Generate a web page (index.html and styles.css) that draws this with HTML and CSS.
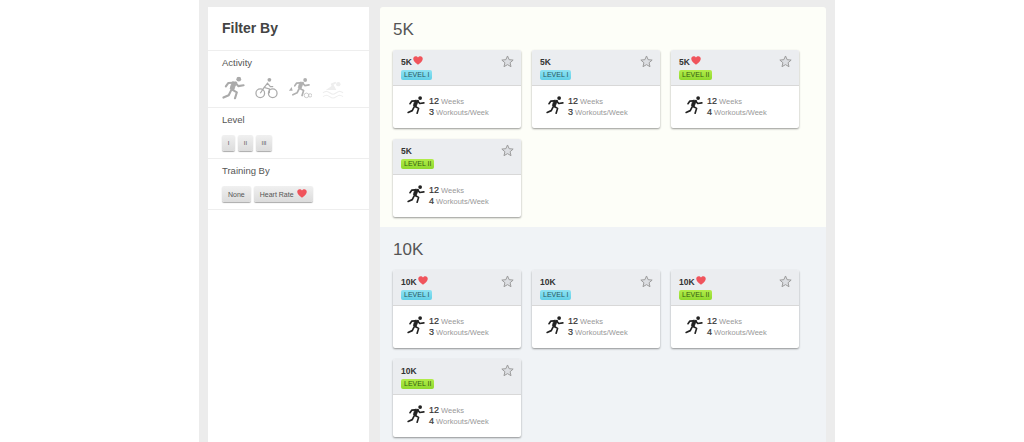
FILE: index.html
```html
<!DOCTYPE html>
<html lang="en">
<head>
<meta charset="utf-8">
<title>Training Plans</title>
<link rel="stylesheet" href="styles.css">
</head>
<body>
<svg class="defs" width="0" height="0" aria-hidden="true">
  <symbol id="run" viewBox="0 0 24 24">
    <circle cx="17.500" cy="2.800" r="2.500" fill="currentColor"/>
    <path d="M15.500 6l-2 4.500-1.500 4-3.500-1.500 1-4 1.500-3.500z" fill="currentColor" stroke="currentColor" stroke-width="1" stroke-linejoin="round"/>
    <path d="M14 6.500l3 3.500 5.500-.8M11 6.500l-4.500.3-2.500 3.500M11 14l4.500 2.500-2 6.500M9.500 14.500l-2.500 5-5.500 2.500" fill="none" stroke="currentColor" stroke-width="2.200" stroke-linejoin="round" stroke-linecap="round"/>
  </symbol>
  <symbol id="heart" viewBox="0 0 20 18">
    <path d="M10 17.500C3 12 .5 9 .5 5.400.5 2.600 2.700.5 5.300.5 7.200.5 9 1.600 10 3.200 11 1.600 12.800.5 14.700.5c2.600 0 4.800 2.100 4.800 4.900C19.500 9 17 12 10 17.500z"/>
  </symbol>
  <symbol id="star" viewBox="0 0 20 20">
    <path d="M10 1.500l2.500 5.700 6.200.6-4.700 4.100 1.400 6.100-5.400-3.200-5.400 3.200 1.400-6.100-4.700-4.100 6.200-.6z"/>
  </symbol>
</svg>
<div class="shell">
  <aside class="sidebar">
    <h2 class="filter-title">Filter By</h2>
    <section class="filter filter-activity">
      <h3 class="filter-label">Activity</h3>
      <div class="activity-icons">
        <svg class="act act-run" viewBox="0 0 24 24"><use href="#run"/></svg>
        <svg class="act act-bike" viewBox="0 0 24 24">
          <circle cx="5.500" cy="17.500" r="4.500"/><circle cx="18.500" cy="17.500" r="4.500"/>
          <path d="M5.500 17.500l4-6 5.500 1.500v4.500M9.500 11.500l3.500-4.500 3 3.500h3"/>
          <circle class="fill" cx="15" cy="3.500" r="2"/>
        </svg>
        <svg class="act act-tri" viewBox="0 0 26 24">
          <use href="#run" x="4" width="20" height="22"/>
          <path class="fill" d="M1 15l3-4 1 4z"/>
          <circle class="thin" cx="20" cy="20" r="2.500"/><circle class="thin" cx="24" cy="20" r="1.800"/>
        </svg>
        <svg class="act act-swim" viewBox="0 0 24 24">
          <circle class="fill" cx="17" cy="8" r="2.300"/>
          <path class="fill" d="M4 14l6-4-1-2.500 5-2 1 1.500-3 1.500 3 5.500z"/>
          <path d="M1 17c3-2 4-2 7 0s4 2 7 0 4-2 7 0M1 21c3-2 4-2 7 0s4 2 7 0 4-2 7 0"/>
        </svg>
      </div>
    </section>
    <section class="filter filter-level">
      <h3 class="filter-label">Level</h3>
      <div class="buttons">
        <button class="btn btn-sm">I</button>
        <button class="btn btn-sm">II</button>
        <button class="btn btn-sm">III</button>
      </div>
    </section>
    <section class="filter filter-training">
      <h3 class="filter-label">Training By</h3>
      <div class="buttons">
        <button class="btn">None</button>
        <button class="btn">Heart Rate <svg class="heart heart-btn"><use href="#heart"/></svg></button>
      </div>
    </section>
  </aside>
  <main class="content">
    <section class="group group-5k">
      <h1 class="group-title">5K</h1>
      <div class="cards">
        <article class="card">
          <header class="card-head">
            <div class="card-name">5K<svg class="heart"><use href="#heart"/></svg></div>
            <span class="badge badge-one">LEVEL I</span>
            <svg class="star"><use href="#star"/></svg>
          </header>
          <div class="card-body">
            <svg class="runner"><use href="#run"/></svg>
            <p class="stats"><b>12</b> Weeks<br><b>3</b> Workouts/Week</p>
          </div>
        </article>
        <article class="card">
          <header class="card-head">
            <div class="card-name">5K</div>
            <span class="badge badge-one">LEVEL I</span>
            <svg class="star"><use href="#star"/></svg>
          </header>
          <div class="card-body">
            <svg class="runner"><use href="#run"/></svg>
            <p class="stats"><b>12</b> Weeks<br><b>3</b> Workouts/Week</p>
          </div>
        </article>
        <article class="card">
          <header class="card-head">
            <div class="card-name">5K<svg class="heart"><use href="#heart"/></svg></div>
            <span class="badge badge-two">LEVEL II</span>
            <svg class="star"><use href="#star"/></svg>
          </header>
          <div class="card-body">
            <svg class="runner"><use href="#run"/></svg>
            <p class="stats"><b>12</b> Weeks<br><b>4</b> Workouts/Week</p>
          </div>
        </article>
        <article class="card">
          <header class="card-head">
            <div class="card-name">5K</div>
            <span class="badge badge-two">LEVEL II</span>
            <svg class="star"><use href="#star"/></svg>
          </header>
          <div class="card-body">
            <svg class="runner"><use href="#run"/></svg>
            <p class="stats"><b>12</b> Weeks<br><b>4</b> Workouts/Week</p>
          </div>
        </article>
      </div>
    </section>
    <section class="group group-10k">
      <h1 class="group-title">10K</h1>
      <div class="cards">
        <article class="card">
          <header class="card-head">
            <div class="card-name">10K<svg class="heart"><use href="#heart"/></svg></div>
            <span class="badge badge-one">LEVEL I</span>
            <svg class="star"><use href="#star"/></svg>
          </header>
          <div class="card-body">
            <svg class="runner"><use href="#run"/></svg>
            <p class="stats"><b>12</b> Weeks<br><b>3</b> Workouts/Week</p>
          </div>
        </article>
        <article class="card">
          <header class="card-head">
            <div class="card-name">10K</div>
            <span class="badge badge-one">LEVEL I</span>
            <svg class="star"><use href="#star"/></svg>
          </header>
          <div class="card-body">
            <svg class="runner"><use href="#run"/></svg>
            <p class="stats"><b>12</b> Weeks<br><b>3</b> Workouts/Week</p>
          </div>
        </article>
        <article class="card">
          <header class="card-head">
            <div class="card-name">10K<svg class="heart"><use href="#heart"/></svg></div>
            <span class="badge badge-two">LEVEL II</span>
            <svg class="star"><use href="#star"/></svg>
          </header>
          <div class="card-body">
            <svg class="runner"><use href="#run"/></svg>
            <p class="stats"><b>12</b> Weeks<br><b>4</b> Workouts/Week</p>
          </div>
        </article>
        <article class="card">
          <header class="card-head">
            <div class="card-name">10K</div>
            <span class="badge badge-two">LEVEL II</span>
            <svg class="star"><use href="#star"/></svg>
          </header>
          <div class="card-body">
            <svg class="runner"><use href="#run"/></svg>
            <p class="stats"><b>12</b> Weeks<br><b>4</b> Workouts/Week</p>
          </div>
        </article>
      </div>
    </section>
  </main>
</div>
</body>
</html>
```
FILE: styles.css
```css
* { box-sizing: border-box; }
html, body { height: 100%; }
body {
  margin: 0;
  background: #fff;
  overflow: hidden;
  font-family: "Liberation Sans", Arial, sans-serif;
  color: #444;
}
.defs { position: absolute; }
.shell {
  width: 636px;
  height: 442px;
  margin-left: 199px;
  padding: 7px 9px 0;
  background: #ececec;
  display: flex;
  gap: 11px;
  overflow: hidden;
}
.sidebar { width: 161px; flex: none; background: #fff; height: 600px; }
.filter-title {
  margin: 0;
  height: 44px;
  padding: 13px 0 0 14px;
  font-size: 14px;
  line-height: 16px;
  font-weight: bold;
  color: #444;
  border-bottom: 1px solid #eee;
}
.filter { padding: 6px 14px 0; border-bottom: 1px solid #eee; }
.filter-activity { height: 57px; }
.filter-level { height: 51px; }
.filter-training { height: 51px; }
.filter-label {
  margin: 0;
  font-size: 9.500px;
  line-height: 12px;
  font-weight: normal;
  color: #555;
}
.activity-icons { display: flex; gap: 10px; margin-top: 7px; }
.act { width: 23px; height: 24px; flex: none; fill: #aaa; color: #aaa; }
.act-bike { fill: none; stroke: #aaa; stroke-width: 1.300; }
.act-bike .fill { fill: #aaa; stroke: none; }
.act-tri { fill: #b0b0b0; color: #b0b0b0; width: 24px; }
.act-tri .thin { fill: none; stroke: #bbb; stroke-width: .8; }
.act-swim { fill: none; stroke: #eee; stroke-width: 1.100; }
.act-swim .fill { fill: #eee; stroke: none; }
.filter-level .buttons { margin-top: 9px; }
.filter-training .buttons { margin-top: 9px; }
.buttons { display: flex; gap: 3px; }
.btn {
  height: 16px;
  padding: 0 6px;
  border: 0;
  border-radius: 2px;
  background: linear-gradient(#f0f0f0, #dcdcdc);
  box-shadow: 0 1px 1px #aaa;
  font-family: inherit;
  font-size: 7px;
  color: #555;
  display: flex;
  align-items: center;
  gap: 3px;
}
.btn-sm { width: 13px; padding: 0; justify-content: center; font-size: 6px; }
.btn-sm:nth-child(2) { width: 15px; }
.btn-sm:nth-child(3) { width: 16px; }
.content { width: 446px; flex: none; }
.group { padding: 13px 13px 0; }
.group-5k { background: #fdfef8; height: 220px; border-radius: 3px 3px 0 0; }
.group-10k { background: #f0f3f6; height: 260px; }
.group-title {
  margin: 0 0 10px;
  height: 20px;
  font-size: 17px;
  line-height: 20px;
  font-weight: normal;
  color: #555;
}
.cards { display: flex; flex-wrap: wrap; gap: 11px; }
.card {
  width: 128px;
  height: 78px;
  background: #fff;
  border-radius: 2px;
  box-shadow: 0 1px 2px rgba(0,0,0,.4);
}
.card-head {
  position: relative;
  height: 36px;
  padding: 7px 8px 0;
  background: #ebedf0;
  border-bottom: 1px solid #d8d8d8;
  border-radius: 2px 2px 0 0;
}
.card-name {
  display: flex;
  align-items: center;
  height: 10px;
  font-size: 8.500px;
  line-height: 10px;
  font-weight: bold;
  color: #333;
}
.heart { width: 10px; height: 9px; margin-left: 1px; margin-top: -3px; fill: #f0545c; flex: none; }
.heart-btn { margin: -2px 0 0 0; }
.badge {
  display: inline-block;
  height: 10px;
  margin-top: 3px;
  padding: 0 3px;
  border-radius: 2px;
  font-size: 7px;
  line-height: 10px;
  color: #2a5560;
  vertical-align: top;
}
.badge-one { background: linear-gradient(#8fe3f3, #62cfe6); }
.badge-two { background: linear-gradient(#b2ec4a, #8fd92e); color: #355a10; }
.star {
  position: absolute;
  top: 5px;
  right: 7px;
  width: 13px;
  height: 13px;
  fill: #dcdee2;
  stroke: #9a9a9a;
  stroke-width: 1.500;
}
.card-body {
  height: 42px;
  padding: 9px 0 0 14px;
  display: flex;
  align-items: flex-start;
  gap: 4px;
}
.runner { width: 18px; height: 20px; flex: none; color: #222; }
.stats {
  margin: 1px 0 0;
  font-size: 7.500px;
  line-height: 11px;
  color: #999;
  white-space: nowrap;
}
.stats b { font-size: 9px; font-weight: normal; color: #333; -webkit-text-stroke: .2px #333; }
```
